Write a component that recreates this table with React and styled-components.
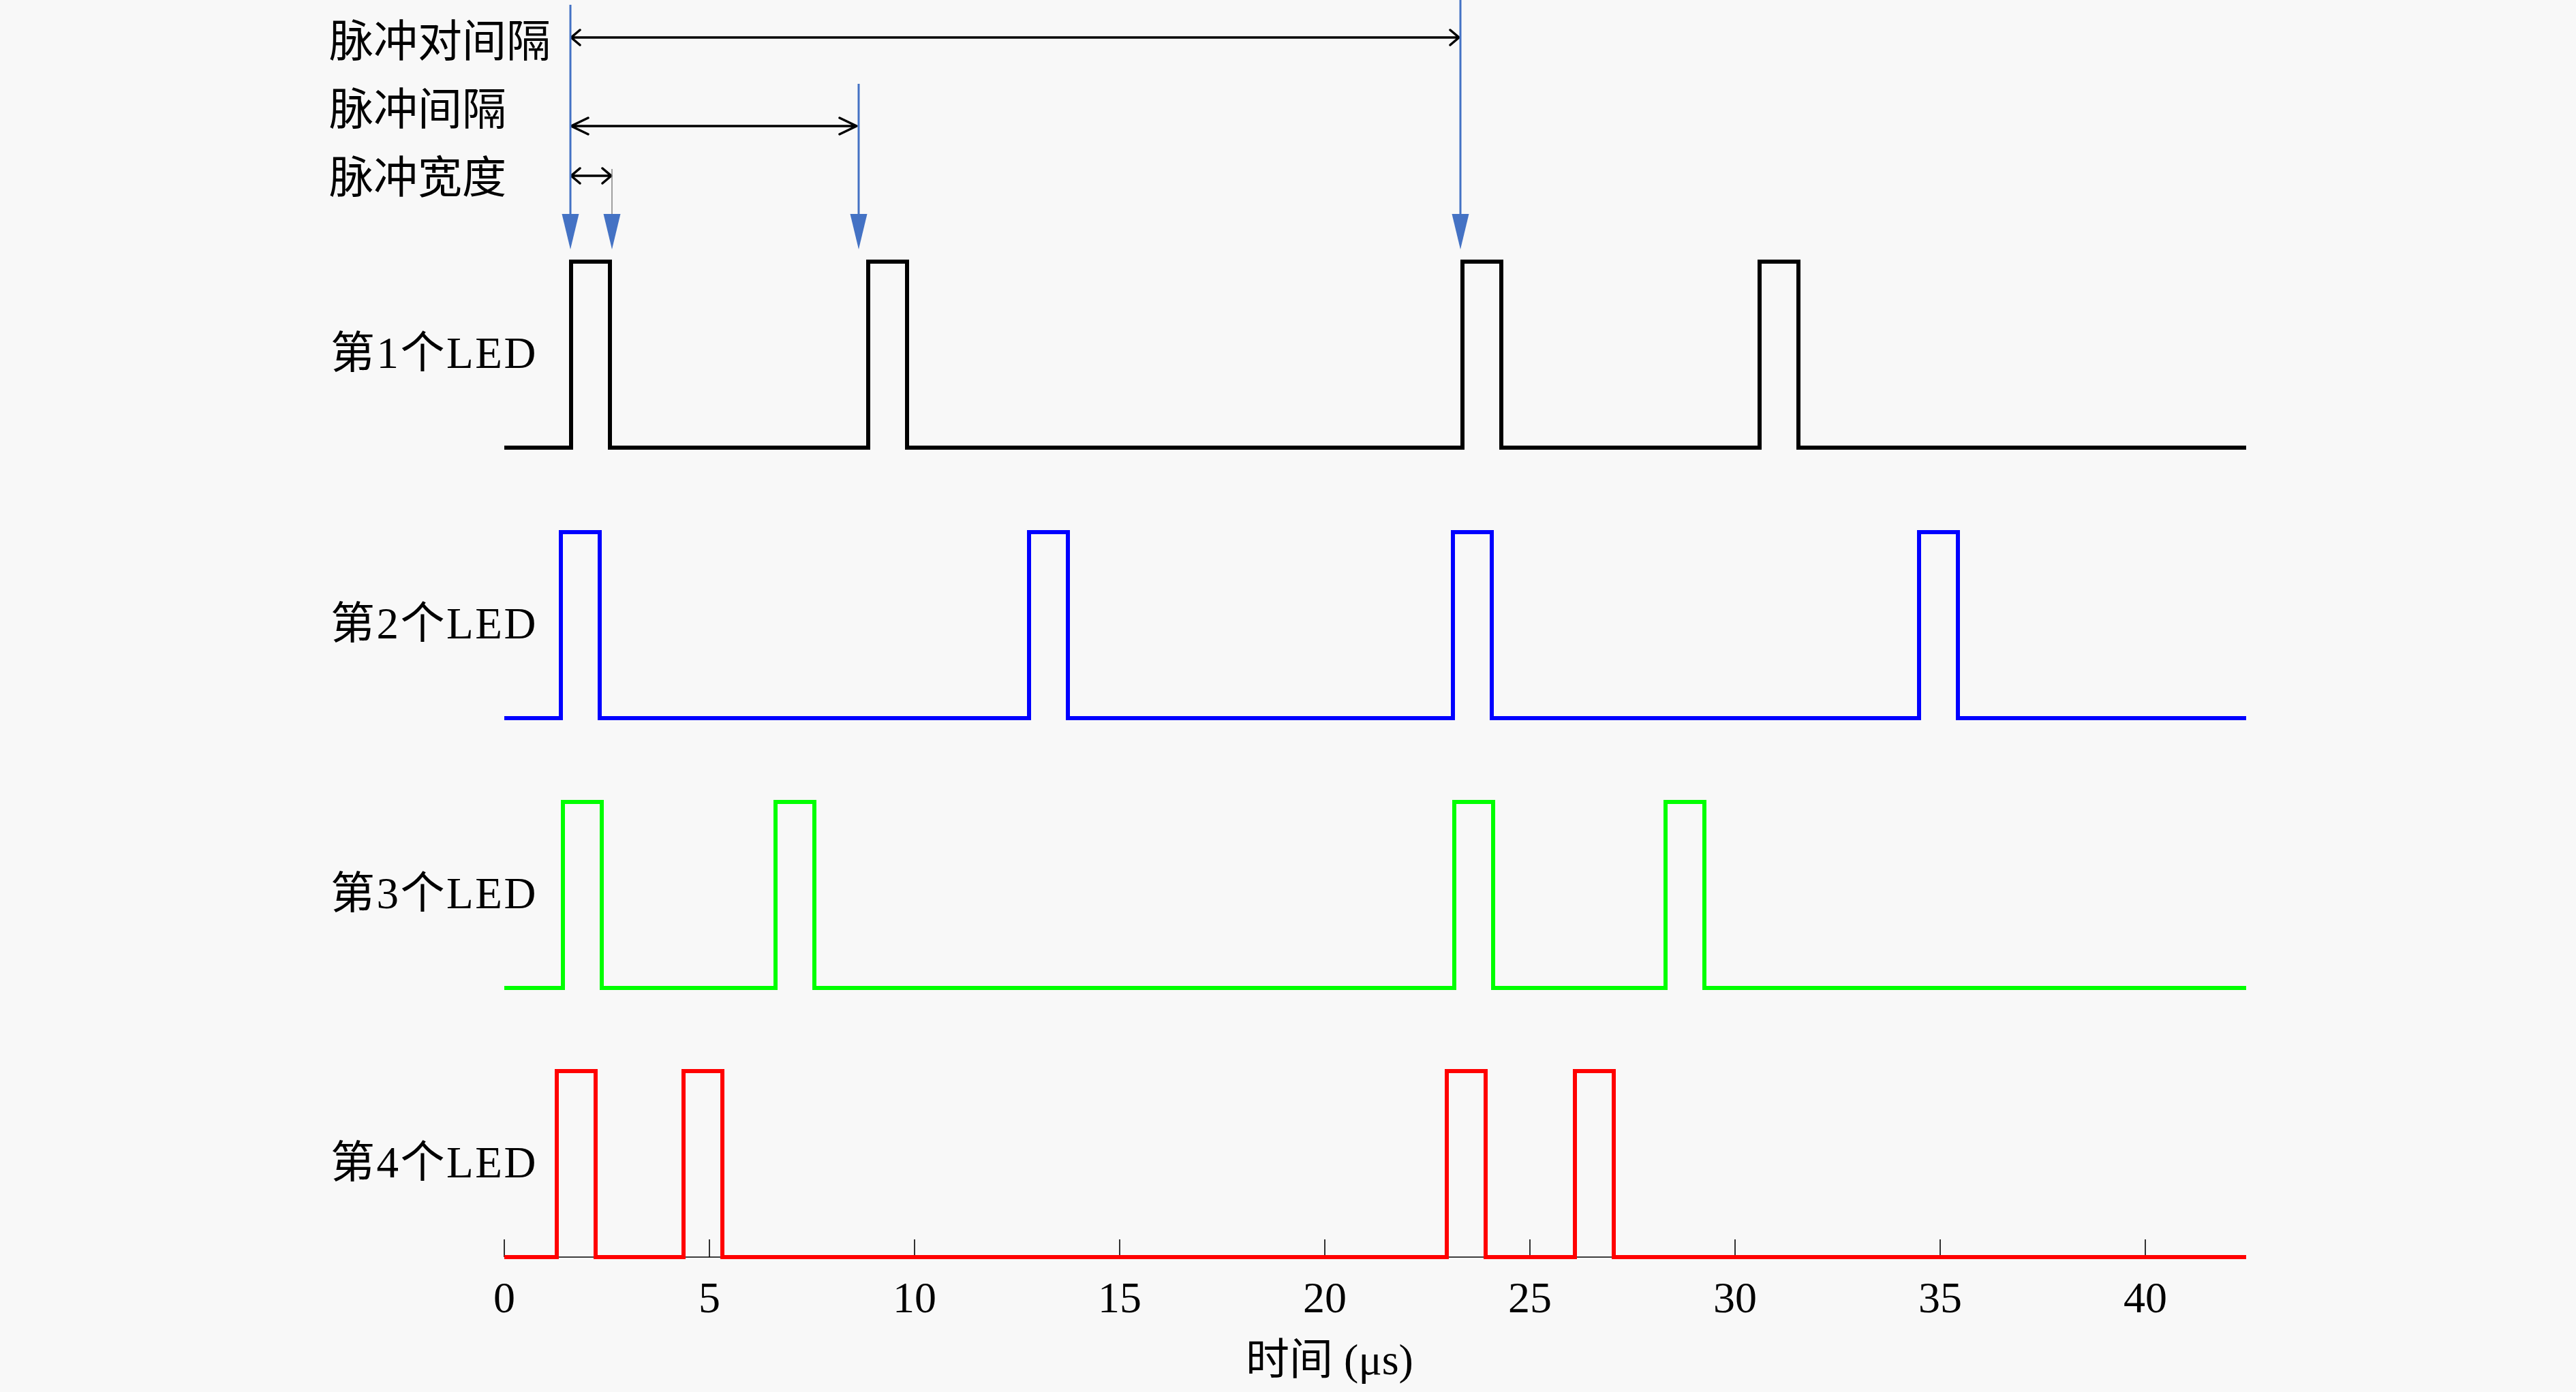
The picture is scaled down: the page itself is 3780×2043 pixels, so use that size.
import React from "react";
import styled, { createGlobalStyle } from "styled-components";

const GlobalStyle = createGlobalStyle`
  html, body {
    margin: 0;
    padding: 0;
    background: #f8f8f8;
  }
  #root {
    width: 3780px;
    height: 2043px;
  }
`;

const Page = styled.main`
  width: 3780px;
  height: 2043px;
  background: #f8f8f8;
  display: flex;
  align-items: stretch;
  justify-content: stretch;
  overflow: hidden;
`;

const Chart = styled.svg`
  display: block;
  width: 3780px;
  height: 2043px;
`;

const Caption = styled.text`
  font-family: "Liberation Serif", "Noto Sans CJK SC", serif;
  font-size: ${(p) => p.$size || 65}px;
  letter-spacing: ${(p) => p.$spacing || 0}px;
  fill: #000;
  text-anchor: ${(p) => p.$anchor || "start"};
`;

const Trace = styled.path`
  fill: none;
  stroke: ${(p) => p.$color};
  stroke-width: ${(p) => p.$width};
  stroke-linejoin: miter;
  stroke-linecap: butt;
`;

const AxisLine = styled.line`
  stroke: #000;
  stroke-width: 1.6;
`;

const Pointer = styled.line`
  stroke: ${(p) => p.$color || "#4472c4"};
  stroke-width: ${(p) => p.$width || 3};
`;

const PointerHead = styled.polygon`
  fill: #4472c4;
`;

const Span = styled.path`
  fill: none;
  stroke: #000;
  stroke-width: 3.5;
  stroke-linecap: round;
  stroke-linejoin: round;
`;

const X0 = 740;
const XEND = 3296;
const PX_PER_US = 60.2;
const PULSE_W = 57;
const HEIGHT = 273;

const lanes = [
  { name: "第1个LED", color: "#000000", width: 6, base: 657, starts: [838, 1274, 2146, 2582] },
  { name: "第2个LED", color: "#0000ff", width: 6, base: 1054, starts: [823, 1510, 2132, 2816] },
  { name: "第3个LED", color: "#00ff00", width: 6, base: 1450, starts: [826, 1138, 2134, 2444] },
  { name: "第4个LED", color: "#ff0000", width: 6, base: 1845, starts: [817, 1003, 2123, 2311] },
];

function tracePath(base, starts) {
  const high = base - HEIGHT;
  let d = `M ${X0} ${base}`;
  starts.forEach((s) => {
    d += ` H ${s} V ${high} H ${s + PULSE_W} V ${base}`;
  });
  d += ` H ${XEND}`;
  return d;
}

function spanPath(x1, x2, y, len, half) {
  return (
    `M ${x1} ${y} H ${x2} ` +
    `M ${x1 + len} ${y - half} L ${x1} ${y} L ${x1 + len} ${y + half} ` +
    `M ${x2 - len} ${y - half} L ${x2} ${y} L ${x2 - len} ${y + half}`
  );
}

const spans = [
  { label: "脉冲对间隔", textY: 83, y: 55, x1: 838, x2: 2141, len: 13, half: 11 },
  { label: "脉冲间隔", textY: 183, y: 185, x1: 838, x2: 1257, len: 25, half: 12 },
  { label: "脉冲宽度", textY: 283, y: 258, x1: 838, x2: 897, len: 13, half: 11 },
];

const pointers = [
  { x: 837, top: 7, color: "#4472c4", width: 3 },
  { x: 898, top: 248, color: "#8a8a8a", width: 1.6 },
  { x: 1260, top: 123, color: "#4472c4", width: 3 },
  { x: 2143, top: 0, color: "#4472c4", width: 3 },
];

const ticks = [0, 5, 10, 15, 20, 25, 30, 35, 40];

export default function App() {
  const axisY = 1845;
  return (
    <>
      <GlobalStyle />
      <Page>
        <Chart viewBox="0 0 3780 2043" xmlns="http://www.w3.org/2000/svg">
          {spans.map((s) => (
            <g key={s.label}>
              <Caption x={483} y={s.textY}>{s.label}</Caption>
              <Span d={spanPath(s.x1, s.x2, s.y, s.len, s.half)} />
            </g>
          ))}

          {pointers.map((p) => (
            <g key={p.x}>
              <Pointer x1={p.x} y1={p.top} x2={p.x} y2={318} $color={p.color} $width={p.width} />
              <PointerHead points={`${p.x - 12.5},314 ${p.x + 12.5},314 ${p.x},366`} />
            </g>
          ))}

          <AxisLine x1={X0} y1={axisY} x2={XEND} y2={axisY} />
          {ticks.map((t) => {
            const x = X0 + t * PX_PER_US;
            return (
              <g key={t}>
                <AxisLine x1={x} y1={axisY - 26} x2={x} y2={axisY} />
                <Caption x={x} y={1926} $size={64} $anchor="middle">{t}</Caption>
              </g>
            );
          })}

          {lanes.map((l) => (
            <g key={l.name}>
              <Caption x={485} y={l.base - HEIGHT / 2 + 19} $spacing={2.5}>{l.name}</Caption>
              <Trace d={tracePath(l.base, l.starts)} $color={l.color} $width={l.width} />
            </g>
          ))}

          <Caption x={1951} y={2017} $size={64} $anchor="middle">时间 (μs)</Caption>
        </Chart>
      </Page>
    </>
  );
}
